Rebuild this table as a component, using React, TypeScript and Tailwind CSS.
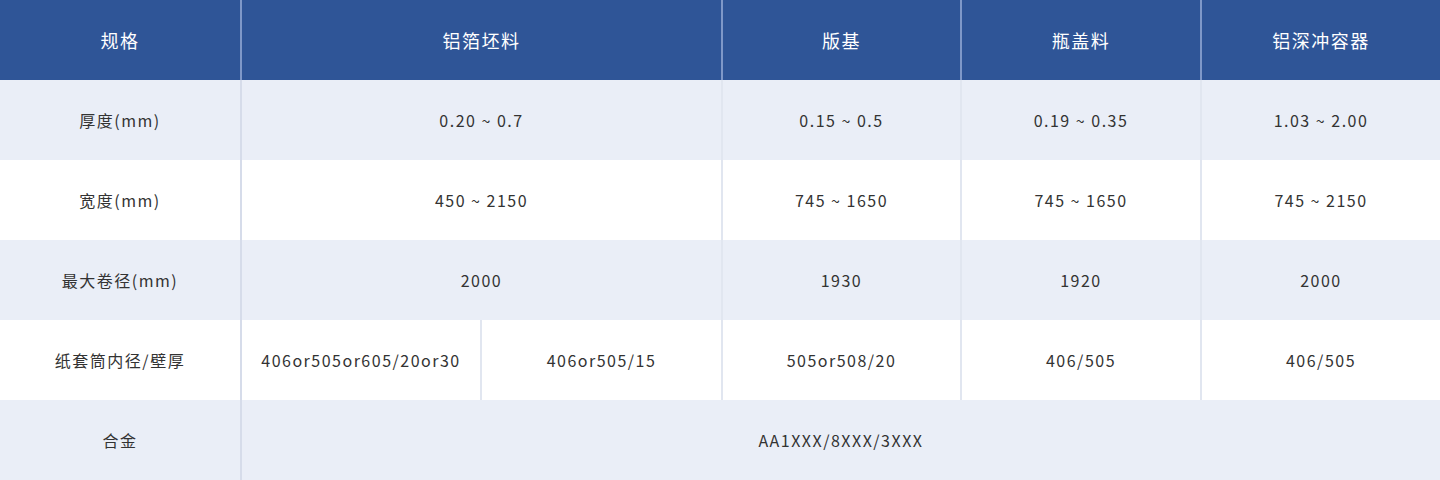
const font = {
  fontFamily: '"Noto Sans CJK SC", "Noto Sans", sans-serif',
};

type Row = {
  label: string;
  cells: { text: string; span?: number }[];
  shaded: boolean;
};

const rows: Row[] = [
  {
    label: "厚度(mm)",
    cells: [
      { text: "0.20 ~ 0.7", span: 2 },
      { text: "0.15 ~ 0.5" },
      { text: "0.19 ~ 0.35" },
      { text: "1.03 ~ 2.00" },
    ],
    shaded: true,
  },
  {
    label: "宽度(mm)",
    cells: [
      { text: "450 ~ 2150", span: 2 },
      { text: "745 ~ 1650" },
      { text: "745 ~ 1650" },
      { text: "745 ~ 2150" },
    ],
    shaded: false,
  },
  {
    label: "最大卷径(mm)",
    cells: [
      { text: "2000", span: 2 },
      { text: "1930" },
      { text: "1920" },
      { text: "2000" },
    ],
    shaded: true,
  },
  {
    label: "纸套筒内径/壁厚",
    cells: [
      { text: "406or505or605/20or30" },
      { text: "406or505/15" },
      { text: "505or508/20" },
      { text: "406/505" },
      { text: "406/505" },
    ],
    shaded: false,
  },
  {
    label: "合金",
    cells: [{ text: "AA1XXX/8XXX/3XXX", span: 5 }],
    shaded: true,
  },
];

const headers = ["铝箔坯料", "版基", "瓶盖料", "铝深冲容器"];

export default function App() {
  return (
    <div className="w-[1440px] h-[480px] bg-white tracking-[1.5px]" style={font}>
      <table className="w-full table-fixed border-collapse">
        <colgroup>
          <col className="w-[241px]" />
          <col className="w-[240px]" />
          <col className="w-[241px]" />
          <col className="w-[239px]" />
          <col className="w-[240px]" />
          <col className="w-[239px]" />
        </colgroup>
        <thead>
          <tr className="h-[80px] bg-[#2f5597] text-white text-[18px]">
            <th className="font-normal border-r-2 border-[#7f98c8]">规格</th>
            <th colSpan={2} className="font-normal border-r-2 border-[#7f98c8]">
              {headers[0]}
            </th>
            <th className="font-normal border-r-2 border-[#7f98c8]">{headers[1]}</th>
            <th className="font-normal border-r-2 border-[#7f98c8]">{headers[2]}</th>
            <th className="font-normal">{headers[3]}</th>
          </tr>
        </thead>
        <tbody>
          {rows.map((row) => (
            <tr
              key={row.label}
              className={`h-[80px] text-[16px] text-[#333333] ${
                row.shaded ? "bg-[#eaeef7]" : "bg-white"
              }`}
            >
              <td className="text-center border-r-2 border-[#d6dcea]">
                {row.label}
              </td>
              {row.cells.map((cell, i) => (
                <td
                  key={i}
                  colSpan={cell.span}
                  className={`text-center ${
                    i === row.cells.length - 1 ? "" : "border-r-2 border-[#e1e6f0]"
                  }`}
                >
                  {cell.text}
                </td>
              ))}
            </tr>
          ))}
        </tbody>
      </table>
    </div>
  );
}
